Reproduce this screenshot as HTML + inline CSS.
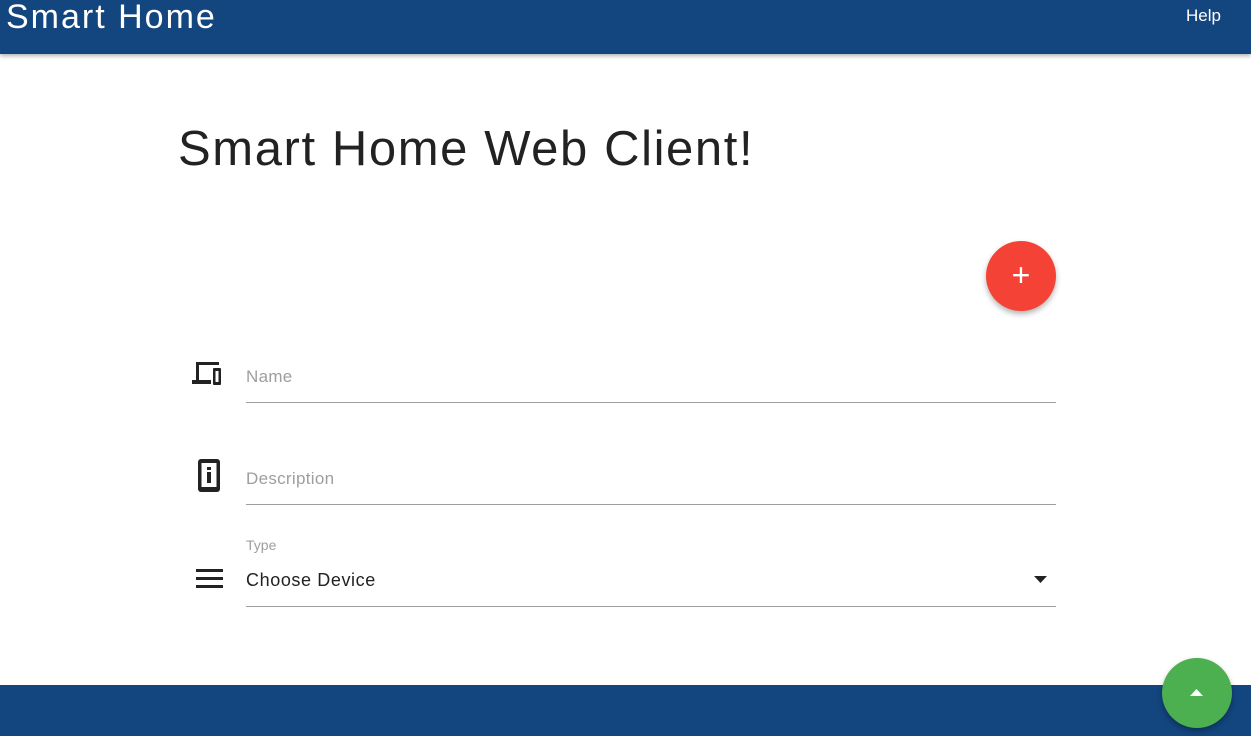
<!DOCTYPE html>
<html><head><style>
body{margin:0;width:1251px;height:736px;position:relative;overflow:hidden;background:#fff;font-family:"Liberation Sans",sans-serif;}
.hdr{position:absolute;left:0;top:0;width:1251px;height:54px;background:#13457f;box-shadow:0 2px 4px rgba(0,0,0,.3);}
.hdr .t{position:absolute;left:6px;top:-2px;font-size:34px;color:#fff;letter-spacing:2px;}
.hdr .h{position:absolute;left:1186px;top:6px;font-size:17px;color:#fff;}
h1{position:absolute;left:178px;top:121px;margin:0;font-weight:normal;font-size:49px;color:#222;letter-spacing:1.6px;}
.fab{position:absolute;left:986px;top:241px;width:70px;height:70px;border-radius:50%;background:#f44336;box-shadow:0 3px 6px rgba(0,0,0,.3);color:#fff;font-size:32px;text-align:center;line-height:68px;}
.line{position:absolute;left:246px;width:810px;height:1px;background:#9e9e9e;}
.ph{position:absolute;left:246px;font-size:17px;color:#9e9e9e;letter-spacing:.3px;}
.foot{position:absolute;left:0;top:685px;width:1251px;height:51px;background:#13457f;}
.gfab{position:absolute;left:1162px;top:658px;width:70px;height:70px;border-radius:50%;background:#4caf50;box-shadow:0 3px 6px rgba(0,0,0,.3);}
</style></head><body>
<div class="hdr"><div class="t">Smart Home</div><div class="h">Help</div></div>
<h1>Smart Home Web Client!</h1>
<div class="fab">+</div>
<svg style="position:absolute;left:192px;top:361px" width="38" height="27"><path d="M4 1h23v3H7v15h12v4H0v-4h4z" fill="#222"/><rect x="21" y="7" width="8" height="17" rx="1" fill="#222"/><rect x="23.5" y="10" width="3" height="11" fill="#fff"/></svg>
<div class="ph" style="top:367px">Name</div>
<div class="line" style="top:402px"></div>
<svg style="position:absolute;left:198px;top:458px" width="24" height="36"><rect x="0" y="1" width="22" height="33" rx="3" fill="#222"/><rect x="3.5" y="5" width="15" height="24" fill="#fff"/><rect x="9" y="9" width="4" height="3" fill="#222"/><rect x="9" y="14" width="4" height="11" fill="#222"/></svg>
<div class="ph" style="top:469px">Description</div>
<div class="line" style="top:504px"></div>
<div style="position:absolute;left:246px;top:537px;font-size:14px;color:#9e9e9e">Type</div>
<svg style="position:absolute;left:196px;top:569px" width="28" height="20"><rect x="0" y="0" width="27" height="3" fill="#222"/><rect x="0" y="8" width="27" height="3" fill="#222"/><rect x="0" y="16" width="27" height="3" fill="#222"/></svg>
<div style="position:absolute;left:246px;top:570px;font-size:18px;color:#222;letter-spacing:.6px">Choose Device</div>
<svg style="position:absolute;left:1034px;top:576px" width="14" height="8"><path d="M0 0h13L6.5 7z" fill="#222"/></svg>
<div class="line" style="top:606px"></div>
<div class="foot"></div>
<div class="gfab"><svg style="position:absolute;left:28px;top:31px" width="14" height="8"><path d="M0 7h13L6.5 0z" fill="#fff"/></svg></div>
</body></html>
